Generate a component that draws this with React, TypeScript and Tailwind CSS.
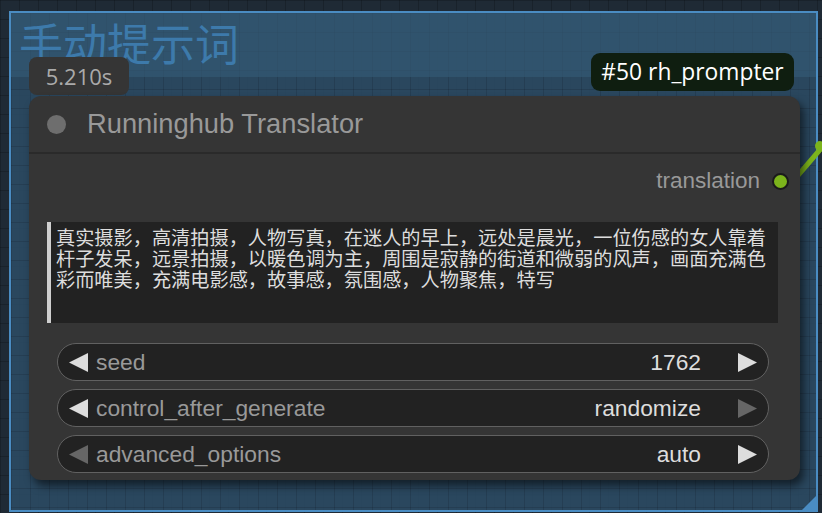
import React from "react";

const widgets = [
  { name: "seed", value: "1762", left: true, right: true },
  { name: "control_after_generate", value: "randomize", left: true, right: false },
  { name: "advanced_options", value: "auto", left: false, right: true },
];

const promptLines = [
  "真实摄影，高清拍摄，人物写真，在迷人的早上，远处是晨光，一位伤感的女人靠着",
  "杆子发呆，远景拍摄，以暖色调为主，周围是寂静的街道和微弱的风声，画面充满色",
  "彩而唯美，充满电影感，故事感，氛围感，人物聚焦，特写",
];

function Arrow({ dir, on }: { dir: "left" | "right"; on: boolean }) {
  return (
    <svg width="19" height="19" viewBox="0 0 19 19" className="shrink-0">
      <polygon
        points={dir === "left" ? "19,0 19,19 0,9.5" : "0,0 0,19 19,9.5"}
        fill={on ? "#dddddd" : "#666666"}
      />
    </svg>
  );
}

export default function App() {
  return (
    <div className="relative h-[513px] w-[822px] overflow-hidden bg-[#1f2a35] bg-[linear-gradient(to_right,rgba(0,0,0,0.18)_1px,transparent_1px),linear-gradient(to_bottom,rgba(0,0,0,0.18)_1px,transparent_1px)] bg-[length:19px_19px] font-['Liberation_Sans',Arial,sans-serif]">
      {/* group */}
      <div className="absolute left-[9px] top-[11px] flex h-[501px] w-[809px] flex-col border-2 border-[#4a8cc2] bg-[#2b4a63]/90 bg-[linear-gradient(to_right,rgba(0,0,0,0.12)_1px,transparent_1px),linear-gradient(to_bottom,rgba(0,0,0,0.12)_1px,transparent_1px)] bg-[length:19px_19px]">
        <div className="h-[64px] bg-[#335874]/70 pl-[8px] pt-[2px] font-['Noto_Sans_CJK_SC',sans-serif] text-[44px] leading-[54px] text-[#3d7aab]">
          手动提示词
        </div>
        <div className="flex-1" />
        <div className="absolute bottom-0 right-0 h-0 w-0 border-b-[14px] border-l-[14px] border-b-[#4a8cc2] border-l-transparent" />
      </div>

      {/* link */}
      <svg className="absolute left-[790px] top-[130px]" width="40" height="60" viewBox="0 0 40 60">
        <path d="M4 50 L28 22 L40 8" stroke="#7cb41c" strokeWidth="5" fill="none" strokeLinecap="round" />
        <circle cx="30" cy="16" r="5" fill="#7cb41c" />
      </svg>

      {/* badges */}
      <div className="absolute left-[29px] top-[57px] flex h-[38px] w-[100px] items-center justify-center rounded-[8px] bg-[#353535] font-['Open_Sans',sans-serif] text-[22px] text-[#aaaaaa]">
        5.210s
      </div>
      <div className="absolute left-[591px] top-[53px] flex h-[38px] w-[203px] items-center justify-center rounded-[9px] bg-[#0f1e10] font-['Open_Sans',sans-serif] text-[22.8px] text-white">
        #50 rh_prompter
      </div>

      {/* node */}
      <div className="absolute left-[29px] top-[96px] flex h-[384px] w-[771px] flex-col rounded-[12px] bg-[#353535] shadow-[4px_6px_8px_rgba(0,0,0,0.55)]">
        <div className="flex h-[58px] items-center border-b-2 border-[#2a2a2a] pl-[18px]">
          <div className="h-[19px] w-[19px] rounded-full bg-[#6e6e6e]" />
          <span className="ml-[21px] text-[27.3px] text-[#999999]">Runninghub Translator</span>
        </div>

        <div className="mt-[12px] flex h-[30px] items-center justify-end pr-[11px]">
          <span className="text-[22.5px] text-[#999999]">translation</span>
          <div className="ml-[12px] h-[17px] w-[17px] rounded-full border-2 border-[#1b1b1b] bg-[#7cb41c]" />
        </div>

        <div className="ml-[18px] mr-[22px] mt-[26px] h-[101px] border-l-4 border-[#cfcfcf] bg-[#222222] pl-[5px] pt-[5px] font-['Noto_Sans_CJK_SC',sans-serif] text-[19.2px] leading-[21px] text-[#dddddd]">
          {promptLines.map((l) => (
            <div key={l} className="whitespace-nowrap">
              {l}
            </div>
          ))}
        </div>

        <div className="ml-[28px] mr-[31px] mt-[20px] flex flex-col gap-[8px]">
          {widgets.map((w) => (
            <div
              key={w.name}
              className="flex h-[38px] items-center rounded-full border-[1.5px] border-[#616161] bg-[#222222] px-[11px] text-[22.8px]"
            >
              <Arrow dir="left" on={w.left} />
              <span className="ml-[8px] text-[#999999]">{w.name}</span>
              <span className="ml-auto text-[#dddddd]">{w.value}</span>
              <span className="ml-[37px]">
                <Arrow dir="right" on={w.right} />
              </span>
            </div>
          ))}
        </div>
      </div>
    </div>
  );
}
